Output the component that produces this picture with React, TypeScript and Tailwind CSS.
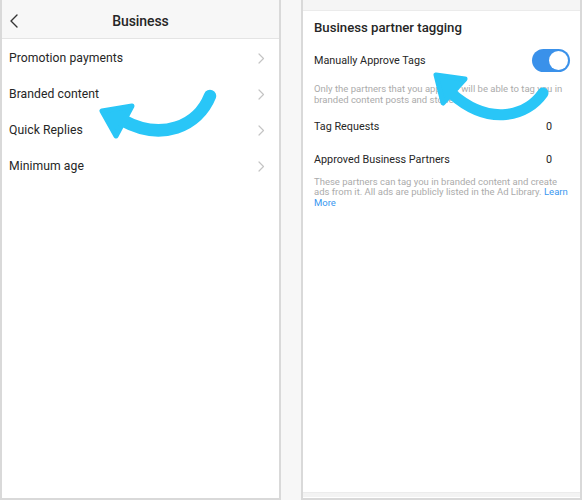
import React from "react";

const Chevron = () => (
  <svg width="7" height="11" viewBox="0 0 7 11" fill="none">
    <path d="M1 1l4.5 4.5L1 10" stroke="#c4c4c4" strokeWidth="1.2" strokeLinecap="round" strokeLinejoin="round" />
  </svg>
);

const rows = ["Promotion payments", "Branded content", "Quick Replies", "Minimum age"];

export default function App() {
  return (
    <div
      className="relative flex w-[582px] h-[500px] bg-[#f7f7f7] text-[#262626] overflow-hidden"
      style={{ fontFamily: "Roboto, 'Noto Sans', sans-serif" }}
    >
      {/* Left panel */}
      <div className="w-[281px] h-full bg-white border-l-2 border-r-2 border-b-2 border-[#d9d9d9] flex flex-col">
        <div className="relative h-[39px] bg-[#f7f7f7] border-b border-[#e4e4e4] flex items-center justify-center pt-[4px]">
          <svg className="absolute left-[7px] top-[14px]" width="10" height="14" viewBox="0 0 10 14" fill="none">
            <path d="M8 1L2 7l6 6" stroke="#333" strokeWidth="1.4" strokeLinecap="round" strokeLinejoin="round" />
          </svg>
          <span className="text-[14px] font-medium tracking-[-0.1px]">Business</span>
        </div>
        {rows.map((r) => (
          <div key={r} className="h-[36px] flex items-center justify-between pl-[7px] pr-[14px] pt-[2px]">
            <span className="text-[12.2px] tracking-[0.05px]">{r}</span>
            <Chevron />
          </div>
        ))}
      </div>

      <div className="w-[20px]" />

      {/* Right panel */}
      <div className="w-[281px] h-full bg-white border-l-2 border-r-2 border-b-2 border-[#d9d9d9] flex flex-col">
        <div className="h-[11px] bg-[#f5f5f5] border-b border-[#ebebeb]" />
        <div className="h-[32px] flex items-center pl-[11px] pt-[1px] text-[13.2px] font-medium">
          Business partner tagging
        </div>
        <div className="h-[34px] flex items-center justify-between pl-[11px] pr-[10px]">
          <span className="text-[10.8px] pt-[2px]">Manually Approve Tags</span>
          <div className="w-[38px] h-[23px] rounded-full bg-[#3a91ea] flex items-center justify-end pr-[2px]">
            <div className="w-[19px] h-[19px] rounded-full bg-white" />
          </div>
        </div>
        <div className="pt-[6px] pl-[11px] text-[9.5px] leading-[11px] text-[#ababab] whitespace-nowrap">
          Only the partners that you approve will be able to tag you in
          <br />
          branded content posts and stories.
        </div>
        <div className="mt-[5.5px] h-[33px] flex items-center justify-between pl-[11px] pr-[28px] text-[10.8px]">
          <span>Tag Requests</span>
          <span>0</span>
        </div>
        <div className="h-[33px] flex items-center justify-between pl-[11px] pr-[28px] text-[10.8px]">
          <span>Approved Business Partners</span>
          <span>0</span>
        </div>
        <div className="pt-[0px] pl-[11px] text-[9.5px] leading-[10.5px] text-[#ababab] whitespace-nowrap">
          These partners can tag you in branded content and create
          <br />
          ads from it. All ads are publicly listed in the Ad Library.{" "}
          <span className="text-[#3897f0]">Learn</span>
          <br />
          <span className="text-[#3897f0]">More</span>
        </div>
        <div className="flex-1" />
        <div className="h-[5px] bg-[#f3f3f3] border-t border-[#ececec] mb-[1px]" />
      </div>

      {/* Arrows overlay */}
      <svg className="absolute left-0 top-0 pointer-events-none" width="582" height="500" viewBox="0 0 582 500">
        <g fill="#29c6f7" stroke="#29c6f7" strokeLinecap="round" strokeLinejoin="round">
          <path d="M210 96 C198 126 162 142 122 120" fill="none" strokeWidth="12.5" />
          <polygon points="102,111 132,106 116,136" strokeWidth="5" />
          <path d="M543 93 C527 116 490 127 452 94" fill="none" strokeWidth="11" />
          <polygon points="436,75 465,79 443,103" strokeWidth="5" />
        </g>
      </svg>
    </div>
  );
}
